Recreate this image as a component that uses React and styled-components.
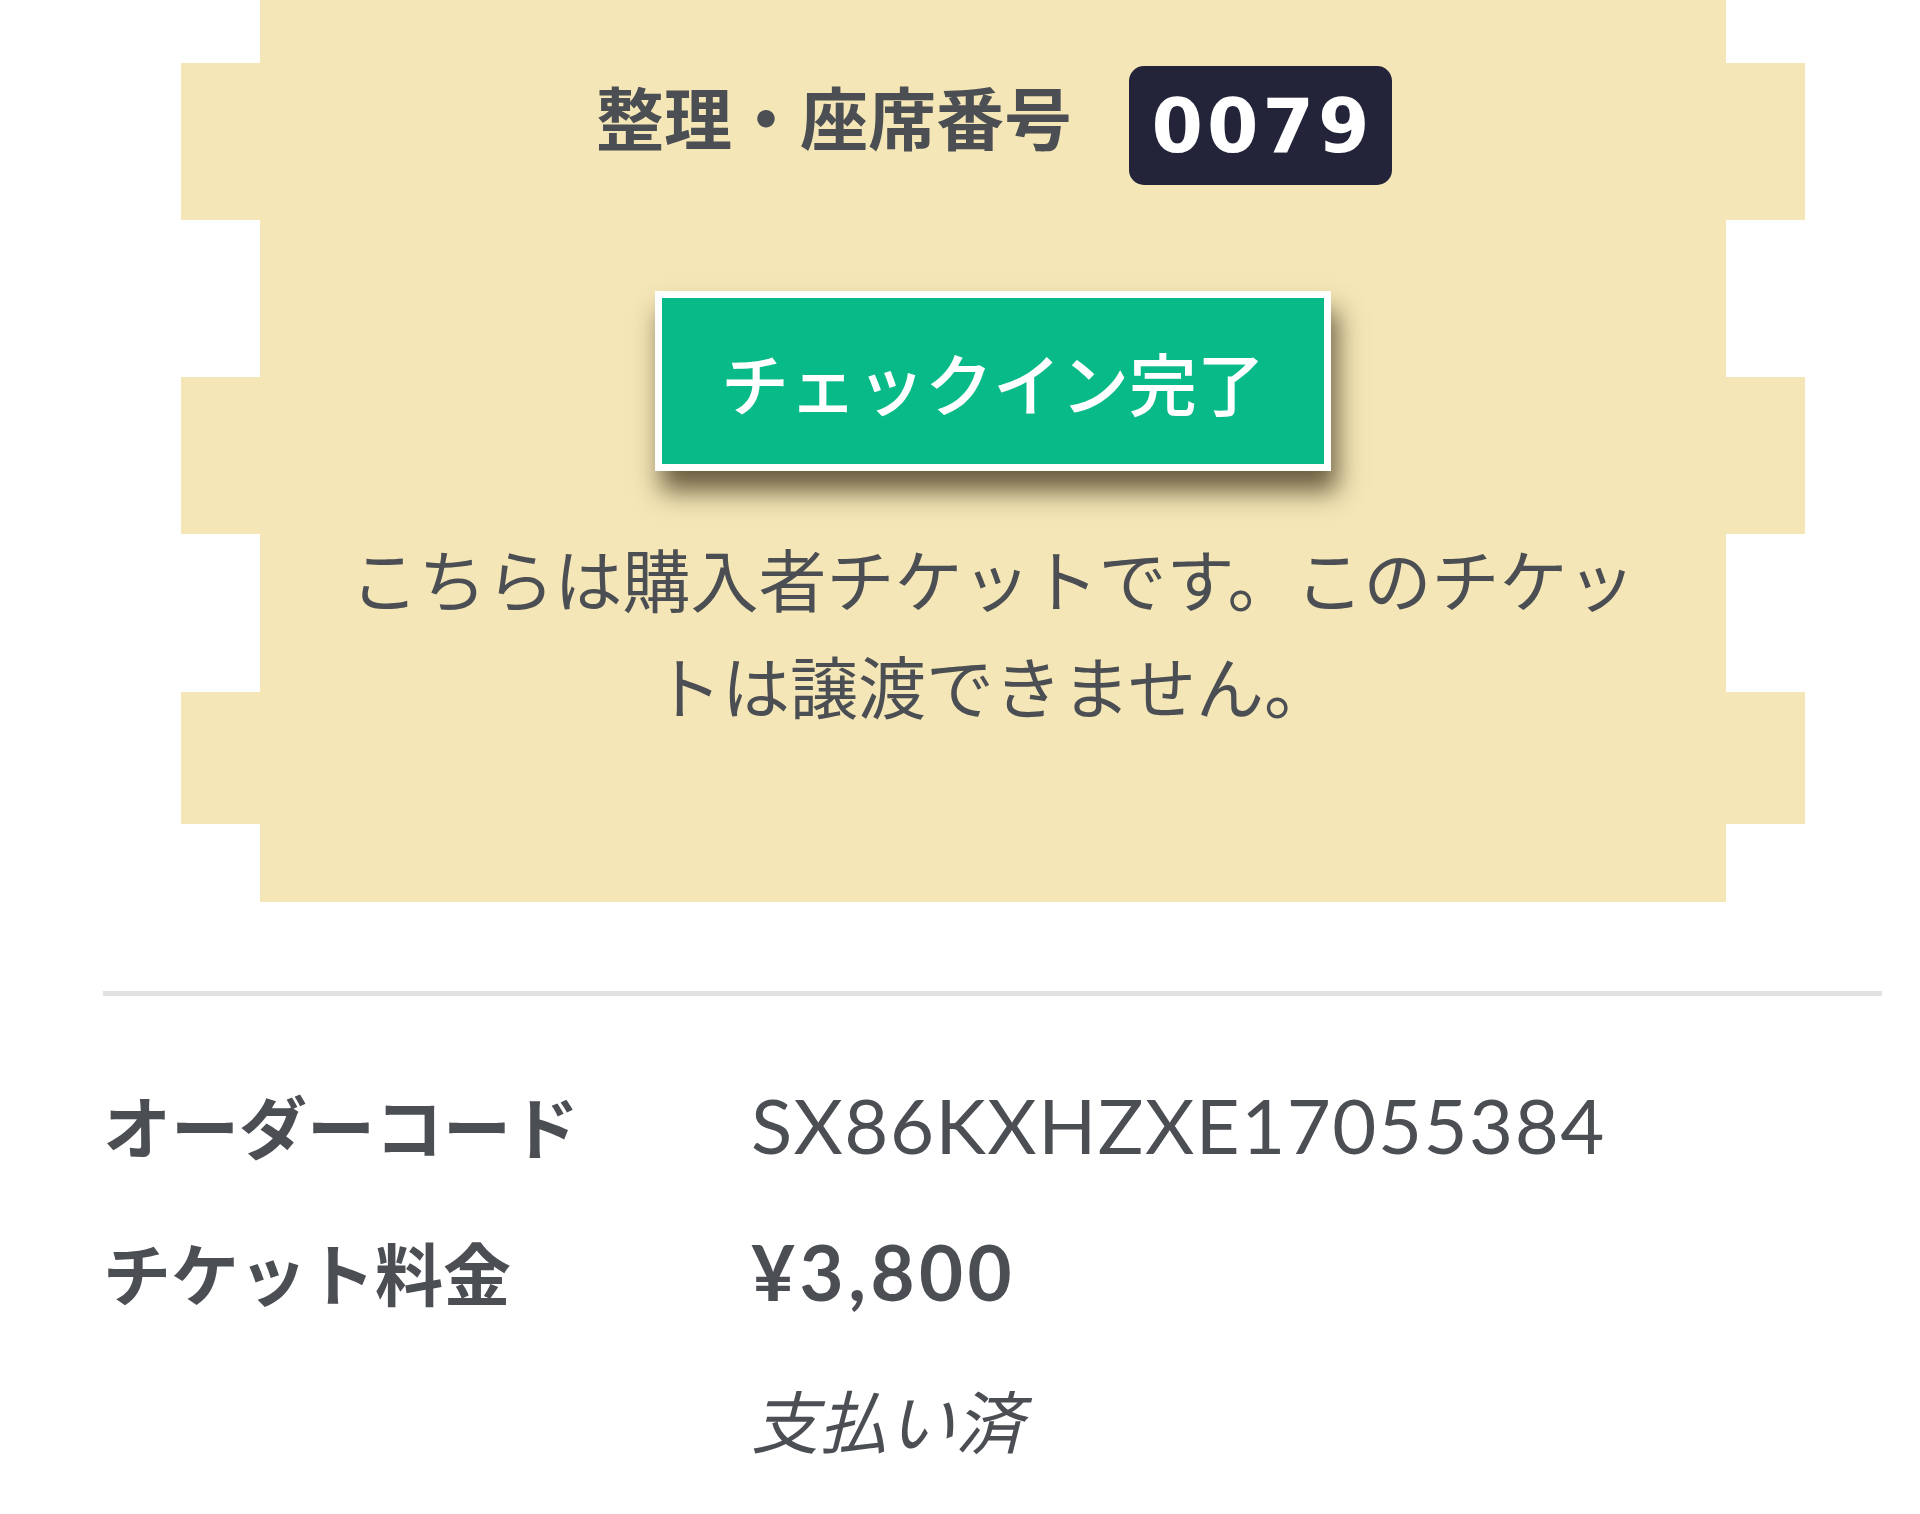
import React from 'react'
import styled, { createGlobalStyle } from 'styled-components'

const GlobalStyle = createGlobalStyle`
  body {
    margin: 0;
    background: #fff;
    font-family: "Noto Sans CJK JP", "Noto Sans", sans-serif;
    color: #4b4e53;
  }
`

const cream = '#f4e6b6'

const Page = styled.div`
  width: 1779px;
  padding-left: 103px;
`

const Ticket = styled.div`
  display: grid;
  grid-template-columns: 79px 1fr 79px;
  width: 1624px;
  height: 902px;
  margin-left: 78px;
`

const Edge = styled.div`
  background: linear-gradient(
    to bottom,
    transparent 0 63px,
    ${cream} 63px 220px,
    transparent 220px 377px,
    ${cream} 377px 534px,
    transparent 534px 692px,
    ${cream} 692px 824px,
    transparent 824px
  );
`

const Body = styled.div`
  background: ${cream};
  display: flex;
  flex-direction: column;
  align-items: center;
  padding-top: 66px;
`

const TitleRow = styled.div`
  display: flex;
  align-items: center;
  gap: 57px;
  margin-left: 2px;
`

const Title = styled.h2`
  margin: 0 0 20px;
  font-size: 68px;
  font-weight: 700;
  line-height: 1;
  color: #4b4e53;
`

const Badge = styled.div`
  display: flex;
  align-items: center;
  justify-content: center;
  width: 263px;
  height: 119px;
  border-radius: 15px;
  background: #23233a;
  color: #fff;
  font-family: "DejaVu Sans", sans-serif;
  font-size: 74px;
  font-weight: 700;
  letter-spacing: 4px;
  text-indent: 4px;
`

const CheckInButton = styled.div`
  box-sizing: border-box;
  display: flex;
  align-items: center;
  justify-content: center;
  width: 676px;
  height: 180px;
  margin-top: 106px;
  border: 7px solid #fff;
  background: #08ba88;
  color: #fff;
  font-size: 68px;
  font-weight: 500;
  box-shadow: 6px 20px 24px rgba(48, 36, 14, 0.7);
`

const Notice = styled.p`
  width: 1327px;
  margin: 53px 0 0;
  text-align: center;
  font-size: 68px;
  font-weight: 400;
  line-height: 107px;
  color: #4b4e53;
`

const Divider = styled.hr`
  height: 5px;
  margin: 89px 0 0;
  border: 0;
  background: #e2e2e2;
`

const InfoList = styled.dl`
  display: grid;
  grid-template-columns: 648px 1fr;
  row-gap: 47px;
  margin: 79px 0 0;
  line-height: 100px;
`

const Label = styled.dt`
  font-size: 68px;
  font-weight: 700;
  color: #4b4e53;
`

const Value = styled.dd`
  margin: 0;
  font-family: "Lato", sans-serif;
  font-size: 76px;
  font-weight: ${p => (p.$bold ? 700 : 400)};
  letter-spacing: ${p => (p.$bold ? '4.5px' : '1.5px')};
  color: #4b4e53;
`

const Note = styled.dd`
  grid-column: 2;
  margin: 0;
  font-size: 68px;
  font-style: italic;
  color: #4b4e53;
`

export default function App() {
  return (
    <Page>
      <GlobalStyle />
      <Ticket>
        <Edge />
        <Body>
          <TitleRow>
            <Title>整理・座席番号</Title>
            <Badge>0079</Badge>
          </TitleRow>
          <CheckInButton>チェックイン完了</CheckInButton>
          <Notice>こちらは購入者チケットです。このチケットは譲渡できません。</Notice>
        </Body>
        <Edge />
      </Ticket>
      <Divider />
      <InfoList>
        <Label>オーダーコード</Label>
        <Value>SX86KXHZXE17055384</Value>
        <Label>チケット料金</Label>
        <Value $bold>¥3,800</Value>
        <Note>支払い済</Note>
      </InfoList>
    </Page>
  )
}
